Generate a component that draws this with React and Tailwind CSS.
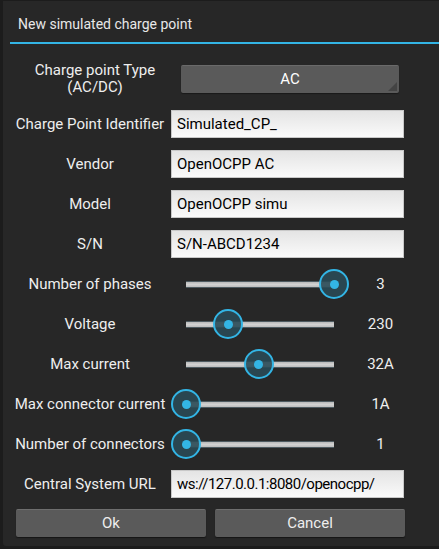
import React from "react";

const font = { fontFamily: "Roboto, 'Noto Sans', sans-serif" };

function Label({ children }) {
  return (
    <div className="w-[160px] shrink-0 text-center text-[15px] leading-[17px] text-[#eeeeee]">
      {children}
    </div>
  );
}

function Input({ value, tight }) {
  return (
    <div
      className={
        tight
          ? "flex h-[28px] w-[233px] items-center border border-[#c8c8c8] bg-gradient-to-b from-[#e4e4e4] to-[#fafafa] pl-[5px] text-[15px] tracking-[-0.5px] text-black"
          : "flex h-[28px] w-[233px] items-center border border-[#c8c8c8] bg-gradient-to-b from-[#e4e4e4] to-[#fafafa] pl-[5px] text-[15px] text-black"
      }
    >
      {value}
    </div>
  );
}

function Slider({ frac, value }) {
  return (
    <div className="flex items-center">
      <div className="relative h-[30px] w-[178px]">
        <div className="absolute left-[15px] right-[15px] top-[12px] h-[7px] border-y border-[#4d5a60] bg-gradient-to-b from-[#b8b8b8] via-[#d2d2d2] to-[#bcbcbc]" />
        <div
          className="absolute top-0 flex h-[30px] w-[30px] items-center justify-center rounded-full border-2 border-[#33b5e5] bg-[#2a4a56]/90"
          style={{ left: `${frac * 148}px` }}
        >
          <div className="h-[9px] w-[9px] rounded-full bg-[#33b5e5]" />
        </div>
      </div>
      <div className="w-[63px] text-center text-[15px] text-[#eeeeee]">{value}</div>
    </div>
  );
}

function Row({ label, children }) {
  return (
    <div className="flex h-[28px] items-center gap-[1px]">
      <Label>{label}</Label>
      {children}
    </div>
  );
}

export default function App() {
  return (
    <div className="h-[549px] w-[439px] bg-[#1c1c1c] pl-[3px] pt-[1px]" style={font}>
      <div className="h-[545px] w-[436px] rounded-bl-[3px] bg-[#272727] pl-[7px]">
        <div className="flex h-[41px] items-center pl-[8px] pt-[6px] text-[14px] text-[#e8e8e8]">
          New simulated charge point
        </div>
        <div className="h-[2px] bg-[#33b5e5]" />
        <div className="flex flex-col pr-[32px]">
          <div className="mt-[18px] flex h-[34px] items-center">
            <div className="w-[170px] shrink-0 text-center text-[15px] leading-[17px] text-[#eeeeee]">
              Charge point Type
              <br />
              (AC/DC)
            </div>
            <div className="relative ml-[1px] flex h-[28px] w-[218px] items-center justify-center rounded-[2px] border-t border-[#6a6a6a] bg-[#5a5a5a] text-[15px] text-white shadow-[0_1px_1px_#1a1a1a]">
              AC
              <div className="absolute bottom-[2px] right-[2px] h-0 w-0 border-b-[9px] border-l-[9px] border-b-[#444444] border-l-transparent" />
            </div>
          </div>
          <div className="mt-[14px] flex flex-col gap-[12px]">
            <Row label="Charge Point Identifier"><Input value="Simulated_CP_" /></Row>
            <Row label="Vendor"><Input value="OpenOCPP AC" /></Row>
            <Row label="Model"><Input value="OpenOCPP simu" /></Row>
            <Row label="S/N"><Input value="S/N-ABCD1234" /></Row>
            <Row label="Number of phases"><Slider frac={1} value="3" /></Row>
            <Row label="Voltage"><Slider frac={0.284} value="230" /></Row>
            <Row label="Max current"><Slider frac={0.49} value="32A" /></Row>
            <Row label="Max connector current"><Slider frac={0} value="1A" /></Row>
            <Row label="Number of connectors"><Slider frac={0} value="1" /></Row>
            <Row label="Central System URL"><Input tight value="ws://127.0.0.1:8080/openocpp/" /></Row>
          </div>
          <div className="mt-[11px] flex gap-[9px] pl-[6px]">
            <div className="flex h-[28px] w-[190px] items-center justify-center rounded-[2px] border-t border-[#6e6e6e] bg-[#5a5a5a] text-[15px] text-[#eeeeee] shadow-[0_1px_1px_#161616]">
              Ok
            </div>
            <div className="flex h-[28px] w-[190px] items-center justify-center rounded-[2px] border-t border-[#6e6e6e] bg-[#5a5a5a] text-[15px] text-[#eeeeee] shadow-[0_1px_1px_#161616]">
              Cancel
            </div>
          </div>
        </div>
      </div>
    </div>
  );
}
